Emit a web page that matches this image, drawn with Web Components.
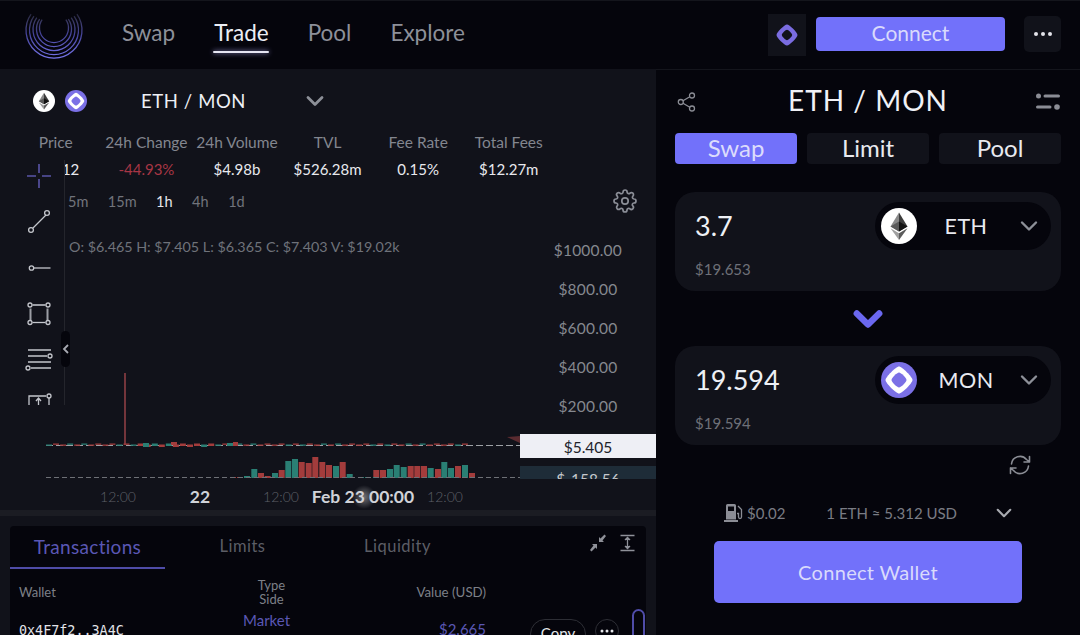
<!DOCTYPE html>
<html>
<head>
<meta charset="utf-8">
<title>Trade</title>
<style>
  html, body { margin: 0; height: 100%; overflow: hidden; background: #05050c; }
  body { font-family: "Lato", "Noto Sans", sans-serif; color: #fff; }
</style>
</head>
<body>
<dex-app></dex-app>
<script>
const ICON_ETH = `<svg viewBox="0 0 36 36" width="100%" height="100%"><circle cx="18" cy="18" r="18" fill="#fff"/>
  <path d="M18 4.5 9.5 18.6 18 23.4z" fill="#8a8a8a"/><path d="M18 4.5 26.5 18.6 18 23.4z" fill="#3c3c3c"/>
  <path d="M18 13.5 9.5 18.6 18 23.4z" fill="#5a5a5a"/><path d="M18 13.5 26.5 18.6 18 23.4z" fill="#141414"/>
  <path d="M9.5 20.3 18 32 18 25.2z" fill="#a0a0a0"/><path d="M26.5 20.3 18 32 18 25.2z" fill="#5c5c5c"/></svg>`;
const ICON_MON = `<svg viewBox="0 0 36 36" width="100%" height="100%"><circle cx="18" cy="18" r="18" fill="#7b70e6"/>
  <path d="M18 4.5C21 4.5 31.5 15 31.5 18S21 31.5 18 31.5 4.5 21 4.5 18 15 4.5 18 4.5z" fill="#fff"/>
  <path d="M18 10.5C20 10.5 25.5 16 25.5 18S20 25.5 18 25.5 10.5 20 10.5 18 16 10.5 18 10.5z" fill="#7b70e6"/></svg>`;
const chevron = (w, c, sw) => `<svg width="${w}" height="${w}" viewBox="0 0 20 20" fill="none" stroke="${c}" stroke-width="${sw}" stroke-linecap="round" stroke-linejoin="round"><path d="M3 6.5 10 13.5 17 6.5"/></svg>`;

class NavLink extends HTMLElement {
  constructor() {
    super();
    this.attachShadow({mode: 'open'});
    this.shadowRoot.innerHTML = `
      <style>
        :host { display: block; position: relative; font-size: 22.5px; color: #8d9099; line-height: 30px; }
        :host([active]) { color: #eceef4; }
        :host([active])::after {
          content: ""; position: absolute; left: -1px; right: 0; top: 33px; height: 2px;
          background: #e6e6f2; box-shadow: 0 0 5px #9a98d8; border-radius: 1px;
        }
      </style><slot></slot>`;
  }
}
customElements.define('nav-link', NavLink);

class AppHeader extends HTMLElement {
  constructor() {
    super();
    this.attachShadow({mode: 'open'});
    let arcs = '';
    [[28, 29], [24.5, 29], [21, 28.5], [17.5, 28], [14.5, 27]].forEach(([r, cy]) => {
      arcs += `<path d="M${54 - r * 0.82} ${cy - r * 0.57}A${r} ${r} 0 1 0 ${54 + r * 0.82} ${cy - r * 0.57}" />`;
    });
    this.shadowRoot.innerHTML = `
      <style>
        :host { display: flex; align-items: center; height: 69px; box-sizing: border-box; background: #05050c;
          border-top: 1px solid #14151c; padding: 0 19px 2px 0; }
        .logo { width: 108px; height: 66px; flex: none; margin-right: 14px; }
        nav { display: flex; gap: 39px; margin-top: -2px; }
        .right { margin-left: auto; display: flex; align-items: center; }
        .mon { width: 38px; height: 42px; background: #11121a; display: flex; align-items: center; justify-content: center; margin-top: 1px; }
        .connect { width: 189px; height: 34px; line-height: 32px; background: #7271fa; border-radius: 4px; margin-left: 10px; color: #d9dafc;
          font-size: 21px; text-align: center; }
        .more { width: 37px; height: 36px; background: #11121a; border-radius: 5px; margin-left: 19px; display: flex; align-items: center; justify-content: center; }
      </style>
      <svg class="logo" viewBox="0 0 108 66" fill="none">
        <defs><linearGradient id="lg" gradientUnits="userSpaceOnUse" x1="0" y1="8" x2="0" y2="58">
          <stop offset="0" stop-color="#8d8cc8" stop-opacity=".12"/><stop offset=".5" stop-color="#4f4db0" stop-opacity=".85"/><stop offset="1" stop-color="#7a78f0"/>
        </linearGradient></defs>
        <g stroke="url(#lg)" stroke-width="1.3">${arcs}</g>
      </svg>
      <nav><nav-link>Swap</nav-link><nav-link active>Trade</nav-link><nav-link>Pool</nav-link><nav-link>Explore</nav-link></nav>
      <div class="right">
        <div class="mon"><svg width="24" height="24" viewBox="0 0 24 24"><path fill-rule="evenodd" fill="#7a6ce0" d="M12 1.5C14.5 1.5 22.5 9.5 22.5 12S14.5 22.5 12 22.5 1.5 14.5 1.5 12 9.5 1.5 12 1.5zM12 6.8C10.6 6.8 6.8 10.6 6.8 12S10.6 17.2 12 17.2 17.2 13.4 17.2 12 13.4 6.8 12 6.8z"/></svg></div>
        <div class="connect">Connect</div>
        <div class="more"><svg width="20" height="6" viewBox="0 0 20 6" fill="#e4e4ea"><circle cx="3" cy="3" r="2"/><circle cx="10" cy="3" r="2"/><circle cx="17" cy="3" r="2"/></svg></div>
      </div>`;
  }
}
customElements.define('app-header', AppHeader);

class PairBar extends HTMLElement {
  constructor() {
    super();
    this.attachShadow({mode: 'open'});
    this.shadowRoot.innerHTML = `
      <style>
        :host { display: flex; align-items: center; height: 64px; padding: 0 0 0 33px; }
        .ic { width: 22px; height: 22px; flex: none; }
        .ic + .ic { margin-left: 10px; }
        .name { width: 105px; margin-left: 54px; font-size: 18.5px; letter-spacing: .6px; color: #eef0f6; white-space: nowrap; }
        .chev { margin-left: 59px; display: flex; }
      </style>
      <div class="ic">${ICON_ETH}</div><div class="ic">${ICON_MON}</div>
      <div class="name">ETH / MON</div>
      <div class="chev">${chevron(20, '#8d9098', 2.8)}</div>`;
  }
}
customElements.define('pair-bar', PairBar);

class StatCell extends HTMLElement {
  constructor() {
    super();
    this.attachShadow({mode: 'open'});
    this.shadowRoot.innerHTML = `
      <style>
        :host { display: flex; flex-direction: column; align-items: center; white-space: nowrap; }
        .l { font-size: 15.5px; line-height: 20px; color: #83868f; margin-top: -1px; }
        .v { font-size: 15px; line-height: 20px; margin-top: 7px; color: #e8e9ee; }
        :host([down]) .v { color: #a83645; }
      </style>
      <div class="l"><slot name="label"></slot></div><div class="v"><slot></slot></div>`;
  }
}
customElements.define('stat-cell', StatCell);

class StatsRow extends HTMLElement {
  constructor() {
    super();
    this.attachShadow({mode: 'open'});
    this.shadowRoot.innerHTML = `
      <style>
        :host { display: grid; grid-template-columns: repeat(6, 90.6px); padding-left: 10.5px; height: 50px; box-sizing: border-box; }
      </style><slot></slot>`;
  }
}
customElements.define('stats-row', StatsRow);

class IntervalBar extends HTMLElement {
  constructor() {
    super();
    this.attachShadow({mode: 'open'});
    this.shadowRoot.innerHTML = `
      <style>
        :host { display: flex; align-items: center; height: 24px; margin: 6px 0 1px; padding: 0 19px 0 68px; font-size: 14.5px; color: #71747c; gap: 19.5px; }
        b { font-weight: 400; color: #e6e7ec; }
        svg { margin-left: auto; }
      </style>
      <span>5m</span><span>15m</span><b>1h</b><span>4h</span><span>1d</span>
      <svg width="24" height="24" viewBox="0 0 24 24" fill="none" stroke="#8b8e97" stroke-width="1.7" stroke-linejoin="round">
        <circle cx="12" cy="12" r="3.2"/>
        <path d="M19.4 15a1.7 1.7 0 0 0 .3 1.8l.1.1a2 2 0 1 1-2.9 2.9l-.1-.1a1.7 1.7 0 0 0-2.8 1.2V21a2 2 0 1 1-4 0v-.1a1.7 1.7 0 0 0-2.8-1.2l-.1.1a2 2 0 1 1-2.9-2.9l.1-.1a1.7 1.7 0 0 0-1.2-2.8H3a2 2 0 1 1 0-4h.1a1.7 1.7 0 0 0 1.2-2.8l-.1-.1a2 2 0 1 1 2.9-2.9l.1.1a1.7 1.7 0 0 0 1.8.3h.1a1.7 1.7 0 0 0 1-1.5V3a2 2 0 1 1 4 0v.1a1.7 1.7 0 0 0 2.8 1.2l.1-.1a2 2 0 1 1 2.9 2.9l-.1.1a1.7 1.7 0 0 0 1.2 2.8H21a2 2 0 1 1 0 4h-.1a1.7 1.7 0 0 0-1.5 1z"/>
      </svg>`;
  }
}
customElements.define('interval-bar', IntervalBar);

// drawing tools lie over the stats and the chart
class ChartTools extends HTMLElement {
  constructor() {
    super();
    this.attachShadow({mode: 'open'});
    this.shadowRoot.innerHTML = `
      <style>
        :host { position: absolute; left: 10px; top: 91px; width: 54px; height: 245px; background: #11121a; border-right: 1px solid #24252c; overflow: visible; }
        svg.t { position: absolute; left: 0; top: 0; }
        .handle { position: absolute; left: 51px; top: 171px; width: 9px; height: 36px; background: #05050c; border-radius: 5px; display: flex; align-items: center; justify-content: center; }
      </style>
      <svg class="t" width="54" height="245" viewBox="10 160 54 245" fill="none" stroke="#c4c6cc" stroke-width="1.3">
        <g stroke="#5a55a8" stroke-width="1.6"><path d="M27 176H36M42 176H51M39 164V173M39 179V188"/></g>
        <path d="M33 228 46 215"/><circle cx="31" cy="230" r="2.4"/><circle cx="47" cy="213" r="2.4"/>
        <circle cx="31.5" cy="268" r="2.2"/><path d="M34 268H50.5"/>
        <path d="M30.5 308.500V321M47.500 308.500V321M32.500 305H45.500" stroke-width="2" stroke="#9b9da4"/><path d="M32.500 322.500H45.500"/>
        <circle cx="30" cy="305" r="2"/><circle cx="48" cy="305" r="2"/><circle cx="30" cy="322.500" r="2"/><circle cx="48" cy="322.500" r="2"/>
        <path d="M28 350H51M28 356H47M28 362H51M31 368H51"/><circle cx="50" cy="356" r="2"/><circle cx="28" cy="368" r="2"/>
        <path d="M29 405V396H46M49 405V398"/><circle cx="49" cy="396" r="2"/><path d="M38.500 405V399M36 401 38.500 398 41 401"/>
      </svg>
      <div class="handle"><svg width="8" height="12" viewBox="0 0 8 12" fill="none" stroke="#a8aab2" stroke-width="1.8"><path d="M6 2 2 6 6 10"/></svg></div>`;
  }
}
customElements.define('chart-tools', ChartTools);

class PriceChart extends HTMLElement {
  constructor() {
    super();
    this.attachShadow({mode: 'open'});
    const GREEN = '#2a7f74', RED = '#a33c3c';
    // volume bars: [zoomed start, height, up]
    const vols = [[34,9,1],[54,5,0],[74,2,0],[96,5,1],[116,8,0],[136,17,1],[156,19,1],[176,16,0],[197,15,0],[217,21,0],[238,16,0],[258,13,0],[279,12,1],[299,16,0],[320,4,1],
      [400,8,0],[420,8,0],[441,9,1],[461,13,1],[482,11,1],[503,12,0],[523,12,0],[543,12,0],[563,10,1],[585,9,0],[604,16,1],[624,10,1],[645,12,0],[666,13,1],[687,5,0]];
    let bars = '';
    vols.forEach(([x, h, up]) => {
      bars += `<rect x="${(240 + x / 3).toFixed(1)}" y="${478 - h}" width="6" height="${h}" fill="${up ? GREEN : RED}"/>`;
    });
    [[230,1],[237,1],[244,2],[358,1],[365,1],[373,1]].forEach(([x, h]) => {
      bars += `<rect x="${x}" y="${478 - h}" width="6" height="${h}" fill="${x < 240 ? RED : GREEN}"/>`;
    });
    // small candles that sit on the last price line
    let candles = '';
    for (let i = 0; i < 60; i++) {
      const x = 46 + i * 7.05;
      const up = (i * 7 + (i >> 2)) % 3 === 0;
      const h = i > 12 && i < 24 ? 2.5 : 1.3;
      candles += `<rect x="${x.toFixed(1)}" y="${444.5 - (i % 2)}" width="6" height="${h}" fill="${up ? GREEN : RED}"/>`;
    }
    candles += `<rect x="143" y="443" width="6" height="4" fill="${GREEN}"/><rect x="227" y="443" width="6" height="3" fill="${GREEN}"/>
      <rect x="171" y="442" width="6" height="3" fill="${RED}"/><rect x="233" y="442" width="5" height="4" fill="${RED}"/>
      <path d="M507 437 520 436V443z" fill="#5a2b30"/>`;
    const times = [[118,'12:00',0],[200,'22',1],[281,'12:00',0],[363,'Feb 23 00:00',1],[445,'12:00',0]]
      .map(([x, t, b]) => `<span class="time${b ? ' major' : ''}" style="left:${x}px">${t}</span>`).join('');
    this.shadowRoot.innerHTML = `
      <style>
        :host { display: block; position: relative; flex: 1; min-height: 0; overflow: hidden; }
        svg { position: absolute; left: 0; top: 0; }
        .ohlc { position: absolute; left: 69px; top: 23px; font-size: 14.3px; line-height: 20px; color: #6f727a; white-space: nowrap; }
        .axis { position: absolute; right: 34px; top: 17px; display: flex; flex-direction: column; text-align: center; font-size: 15.500px; line-height: 39.100px; color: #85888f; letter-spacing: .2px; }
        .last { position: absolute; left: 520px; right: 0; top: 220px; height: 24px; background: #eeeff5; color: #22232b; font-size: 15.500px; line-height: 26px; text-align: center; }
        .liq { position: absolute; left: 520px; right: 0; top: 252px; height: 13px; overflow: hidden; background: #1e2c38; color: #c6c9ce; font-size: 15.500px; line-height: 26px; text-align: center; }
        .time { position: absolute; top: 273px; transform: translateX(-50%); font-size: 14px; line-height: 20px; color: #5e6068; white-space: nowrap; font-weight: 300; }
        .major { color: #d0d2d8; font-size: 17.5px; font-weight: 700; }
        .glow { position: absolute; left: 352px; top: 271px; width: 24px; height: 24px; background: radial-gradient(circle, rgba(255,255,255,.4), rgba(255,255,255,0) 70%); }
      </style>
      <svg width="656" height="296" viewBox="0 214 656 296">
        <line x1="125" y1="373" x2="125" y2="445" stroke="#b84e52" stroke-width="1.2"/>
        ${bars}
        <line x1="46" y1="445.500" x2="520" y2="445.500" stroke="#9ea1a6" stroke-dasharray="7 3"/>
        ${candles}
        <line x1="46" y1="477.500" x2="520" y2="477.500" stroke="#6e7076" stroke-dasharray="5 3"/>
      </svg>
      <div class="ohlc">O: $6.465 H: $7.405 L: $6.365 C: $7.403 V: $19.02k</div>
      <div class="axis"><span>$1000.00</span><span>$800.00</span><span>$600.00</span><span>$400.00</span><span>$200.00</span></div>
      <div class="last">$5.405</div>
      <div class="liq">$-158.56</div>
      <div class="glow"></div>
      ${times}`;
  }
}
customElements.define('price-chart', PriceChart);

class TxPanel extends HTMLElement {
  constructor() {
    super();
    this.attachShadow({mode: 'open'});
    this.shadowRoot.innerHTML = `
      <style>
        :host { display: block; position: relative; background: #05050c; border-radius: 4px 4px 0 0; height: 200px; }
        .tabs { display: grid; grid-template-columns: repeat(3, 155px); height: 43px; font-size: 16.5px; letter-spacing: .5px; color: #5c5e66; text-align: center; line-height: 41px; }
        .tabs .on { color: #5a57b4; border-bottom: 2px solid #4f4ca8; font-size: 19px; letter-spacing: .3px; }
        .tools { position: absolute; right: 10px; top: 8px; display: flex; gap: 12px; }
        .head, .row { display: grid; grid-template-columns: 155px 175px 137px; padding-left: 9px; }
        .head { height: 40px; align-items: center; font-size: 13px; line-height: 14px; color: #7d8088; margin-top: 3px; }
        .c { text-align: center; margin-left: 20px; }
        .r { text-align: right; font-size: 13.3px; }
        .row { position: relative; margin-top: -2px; }
        .wallet { font-family: "DejaVu Sans Mono", monospace; font-size: 13.400px; line-height: 20px; padding-top: 11px; color: #e2e3e8; white-space: nowrap; }
        .type { font-size: 15px; line-height: 20px; color: #5a57b4; text-align: center; margin-left: 10px; }
        .val { font-size: 15px; line-height: 20px; color: #5a57b4; text-align: right; padding-top: 9px; }
        .copy { position: absolute; left: 520px; top: 9px; width: 56px; height: 30px; box-sizing: border-box; border: 1px solid #2d2e35; border-radius: 15px; color: #e4e5ea; font-size: 15px; line-height: 27px; text-align: center; }
        .dots { position: absolute; left: 585px; top: 9px; width: 24px; height: 24px; box-sizing: border-box; border: 1px solid #2d2e35; border-radius: 50%; display: flex; align-items: center; justify-content: center; }
        .thumb { position: absolute; left: 622px; top: 83px; width: 13px; height: 90px; box-sizing: border-box; border: 2px solid #4f4ca8; border-radius: 7px; }
      </style>
      <div class="tabs"><div class="on">Transactions</div><div>Limits</div><div>Liquidity</div></div>
      <div class="tools">
        <svg width="18" height="18" viewBox="0 0 18 18" fill="#8f9199"><path d="M17 2 15.500.5 11.500 4.500 10 3v5h5l-1.500-1.500zM1 16l1.500 1.500 4-4L8 15v-5H3l1.500 1.500z"/></svg>
        <svg width="17" height="18" viewBox="0 0 17 18" fill="none" stroke="#8f9199" stroke-width="1.300"><path d="M1.500 1.500H15.500M1.500 16.500H15.500M8.500 4V14"/><path d="M6 6 8.500 3.500 11 6M6 12 8.500 14.500 11 12" fill="#8f9199"/></svg>
      </div>
      <div class="head"><div>Wallet</div><div class="c">Type<br>Side</div><div class="r">Value (USD)</div></div>
      <div class="row">
        <div class="wallet">0x4F7f2..3A4C</div>
        <div class="type">Market<br>Sell Fees</div>
        <div class="val">$2.665</div>
        <div class="copy">Copy</div>
        <div class="dots"><svg width="14" height="4" viewBox="0 0 14 4" fill="#e4e5ea"><circle cx="2" cy="2" r="1.500"/><circle cx="7" cy="2" r="1.500"/><circle cx="12" cy="2" r="1.500"/></svg></div>
      </div>
      <div class="thumb"></div>`;
  }
}
customElements.define('tx-panel', TxPanel);

class ChartPanel extends HTMLElement {
  constructor() {
    super();
    this.attachShadow({mode: 'open'});
    this.shadowRoot.innerHTML = `
      <style>
        :host { display: flex; flex-direction: column; position: relative; background: #11121a; height: 566px; overflow: hidden; }
        .top { display: flex; flex-direction: column; height: 441px; position: relative; }
        .gap { height: 6px; background: #1b1c23; flex: none; }
        .low { padding: 10px 10px 0; flex: 1; min-height: 0; }
      </style>
      <div class="top"><slot name="top"></slot></div>
      <div class="gap"></div>
      <div class="low"><slot name="low"></slot></div>`;
  }
}
customElements.define('chart-panel', ChartPanel);

class SegTab extends HTMLElement {
  constructor() {
    super();
    this.attachShadow({mode: 'open'});
    this.shadowRoot.innerHTML = `
      <style>
        :host { display: block; height: 31px; background: #11121a; border-radius: 4px; color: #e9eaf0; font-size: 24px; line-height: 29px; text-align: center; }
        :host([active]) { background: #7271fa; color: #dcdcfc; }
      </style><slot></slot>`;
  }
}
customElements.define('seg-tab', SegTab);

class TokenCard extends HTMLElement {
  constructor() {
    super();
    this.attachShadow({mode: 'open'});
    const icon = this.getAttribute('symbol') === 'ETH' ? ICON_ETH : ICON_MON;
    this.shadowRoot.innerHTML = `
      <style>
        :host { display: block; height: 99px; box-sizing: border-box; background: #11121a; border-radius: 20px; padding: 10px 10px 0 20px; }
        .top { display: flex; align-items: center; justify-content: space-between; height: 48px; }
        .amt { font-size: 27px; color: #eef0f5; margin-top: -1px; }
        .pill { width: 176px; height: 48px; box-sizing: border-box; background: #05050c; border-radius: 24px; display: flex; align-items: center; padding: 0 12px 0 6px; }
        .ic { width: 36px; height: 36px; flex: none; }
        .sym { flex: 1; text-align: center; font-size: 21.5px; color: #e9eaf0; letter-spacing: .5px; padding-right: 4px; }
        .usd { font-size: 15px; line-height: 20px; margin-top: 9px; color: #6e7078; }
      </style>
      <div class="top">
        <div class="amt"><slot name="amount"></slot></div>
        <div class="pill"><div class="ic">${icon}</div><div class="sym">${this.getAttribute('symbol')}</div>${chevron(20, '#8d9098', 2.4)}</div>
      </div>
      <div class="usd"><slot name="usd"></slot></div>`;
  }
}
customElements.define('token-card', TokenCard);

class SwapPanel extends HTMLElement {
  constructor() {
    super();
    this.attachShadow({mode: 'open'});
    this.shadowRoot.innerHTML = `
      <style>
        :host { display: flex; flex-direction: column; background: #05050c; padding: 0 19px; border-top: 1px solid #14151c; height: 566px; box-sizing: border-box; }
        .head { display: flex; align-items: center; justify-content: space-between; height: 63px; flex: none; }
        .head svg { width: 26px; flex: none; }
        .title { font-size: 28px; letter-spacing: 1px; color: #f0f1f6; margin-top: -3px; }
        .tabs { display: grid; grid-template-columns: repeat(3, 122px); gap: 10px; }
        .cards { margin-top: 28px; }
        .down { height: 55px; display: flex; align-items: center; justify-content: center; }
        .ref { display: flex; justify-content: flex-end; padding: 8px 29px 0 0; height: 24px; }
        .info { display: flex; align-items: center; height: 28px; margin: 22px 47px 0 49px; font-size: 15px; color: #7a7c84; white-space: nowrap; }
        .gas { margin-right: 4px; display: flex; }
        .rate { margin-left: 41px; }
        .info .chev { margin-left: auto; display: flex; margin-right: 1px; }
        .wallet { margin: 14px 39px 0; height: 62px; background: #7271fa; border-radius: 5px; color: #d9dafc; font-size: 20px; letter-spacing: .3px; display: flex; align-items: center; justify-content: center; flex: none; }
      </style>
      <div class="head">
        <svg height="20" viewBox="-2 0 26 20" fill="none" stroke="#8b8d95" stroke-width="1.300"><circle cx="15" cy="3.500" r="2.500"/><circle cx="3.800" cy="10" r="2.500"/><circle cx="15" cy="16.500" r="2.500"/><path d="M6 8.800 12.800 4.800M6 11.200 12.800 15.200"/></svg>
        <div class="title">ETH / MON</div>
        <svg height="20" viewBox="0 0 26 20" fill="#8b8d95"><circle cx="3.500" cy="4" r="2.500"/><rect x="8.500" y="2.500" width="16.500" height="3" rx="1.500"/><rect x="1" y="13.500" width="15.500" height="3" rx="1.500"/><circle cx="22" cy="15" r="2.800"/></svg>
      </div>
      <div class="tabs"><seg-tab active>Swap</seg-tab><seg-tab>Limit</seg-tab><seg-tab>Pool</seg-tab></div>
      <div class="cards">
        <slot name="from"></slot>
        <div class="down">${chevron(32, '#6b68f0', 4)}</div>
        <slot name="to"></slot>
      </div>
      <div class="ref">
        <svg width="24" height="24" viewBox="0 0 24 24" fill="none" stroke="#8b8d95" stroke-width="1.600" stroke-linecap="round" stroke-linejoin="round">
          <path d="M3.500 11A8.500 8.500 0 0 1 18.500 6.500L21.500 9M21.500 3.500V9H16M20.500 13A8.500 8.500 0 0 1 5.500 17.500L2.500 15M2.500 20.500V15H8"/>
        </svg>
      </div>
      <div class="info">
        <span class="gas"><svg width="19" height="18" viewBox="0 0 19 18" fill="#8b8d95"><path fill-rule="evenodd" d="M2 1.500A1.500 1.500 0 0 1 3.500 0h7A1.500 1.500 0 0 1 12 1.500V15.500H2zM4 2.500V7h6V2.500zM0 16h14v2H0z"/><path d="M14 2 17.500 5.500V13A1.500 1.500 0 0 1 14.500 13V9.500H13" fill="none" stroke="#8b8d95" stroke-width="1.300"/></svg></span>
        <span>$0.02</span>
        <span class="rate">1 ETH ≈ 5.312 USD</span>
        <span class="chev">${chevron(18, '#a8aab0', 2.4)}</span>
      </div>
      <div class="wallet">Connect Wallet</div>`;
  }
}
customElements.define('swap-panel', SwapPanel);

class DexApp extends HTMLElement {
  constructor() {
    super();
    this.attachShadow({mode: 'open'});
    this.shadowRoot.innerHTML = `
      <style>
        :host { display: block; height: 635px; overflow: hidden; background: #05050c; }
        main { display: grid; grid-template-columns: 656px 424px; }
      </style>
      <app-header></app-header>
      <main>
        <chart-panel>
          <pair-bar slot="top"></pair-bar>
          <stats-row slot="top">
            <stat-cell><span slot="label">Price</span>$5.312</stat-cell>
            <stat-cell down><span slot="label">24h Change</span>-44.93%</stat-cell>
            <stat-cell><span slot="label">24h Volume</span>$4.98b</stat-cell>
            <stat-cell><span slot="label">TVL</span>$526.28m</stat-cell>
            <stat-cell><span slot="label">Fee Rate</span>0.15%</stat-cell>
            <stat-cell><span slot="label">Total Fees</span>$12.27m</stat-cell>
          </stats-row>
          <interval-bar slot="top"></interval-bar>
          <price-chart slot="top"></price-chart>
          <chart-tools slot="top"></chart-tools>
          <tx-panel slot="low"></tx-panel>
        </chart-panel>
        <swap-panel>
          <token-card slot="from" symbol="ETH"><span slot="amount">3.7</span><span slot="usd">$19.653</span></token-card>
          <token-card slot="to" symbol="MON"><span slot="amount">19.594</span><span slot="usd">$19.594</span></token-card>
        </swap-panel>
      </main>`;
  }
}
customElements.define('dex-app', DexApp);
</script>
</body>
</html>
